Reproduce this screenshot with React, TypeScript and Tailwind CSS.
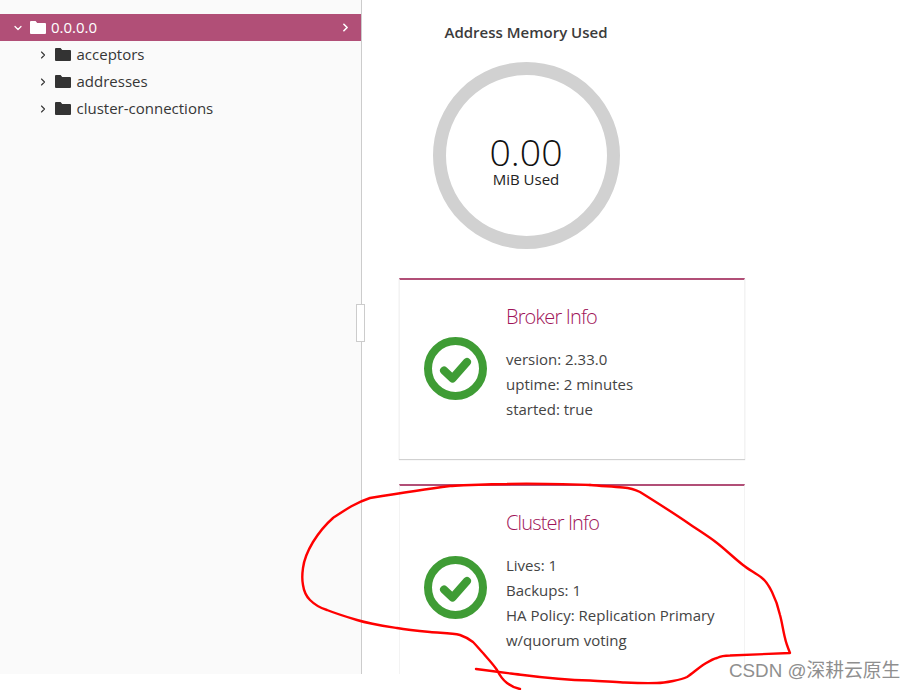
import { ChevronDown, ChevronRight } from 'lucide-react';

const FONT = "font-['Open_Sans',sans-serif]";

function FolderIcon({ className }: { className: string }) {
  return (
    <svg viewBox="0 0 16 13" className={className} fill="currentColor">
      <path d="M1 0h4.6l1.6 2H15a1 1 0 0 1 1 1v9a1 1 0 0 1-1 1H1a1 1 0 0 1-1-1V1a1 1 0 0 1 1-1z" />
    </svg>
  );
}

function TreeRow({ label }: { label: string }) {
  return (
    <div className="flex h-[27px] items-center pl-[37px] text-[#363636]">
      <ChevronRight size={12} strokeWidth={2.25} className="mr-[6px] text-[#363636]" />
      <FolderIcon className="mr-[5.500px] h-[13px] w-[16px] text-[#333333]" />
      <span className="text-[15px]">{label}</span>
    </div>
  );
}

function StatusIcon() {
  return (
    <svg viewBox="0 0 63 63" className="h-[63px] w-[63px]">
      <circle cx="31.5" cy="31.500" r="27.500" fill="none" stroke="#3f9c35" strokeWidth="8" />
      <path d="M20 33.500l8.500 8L43 25" fill="none" stroke="#3f9c35" strokeWidth="8" strokeLinejoin="round" strokeLinecap="round" />
    </svg>
  );
}

function InfoCard({ title, lines, bottom }: { title: string; lines: string[]; bottom?: boolean }) {
  return (
    <div
      className={`flex w-[346px] shrink-0 border-x border-t-2 border-x-[#f3f3f3] border-t-[#b14f77] bg-white ${
        bottom ? 'h-[181px] shadow-[0_1px_1px_rgba(0,0,0,0.18)]' : 'h-[204px]'
      }`}
    >
      <div className={`flex w-[106px] shrink-0 flex-col justify-center pl-[24px] ${bottom ? 'pb-[3px]' : ''}`}>
        <StatusIcon />
      </div>
      <div className="pt-[22px]">
        <h2 className="text-[20px] leading-[30px] font-light tracking-[-0.85px] text-[#a01459]">{title}</h2>
        <div className="mt-[15px] text-[15px] leading-[25px] text-[#444444]">
          {lines.map((line) => (
            <p key={line}>{line}</p>
          ))}
        </div>
      </div>
    </div>
  );
}

export default function App() {
  return (
    <div className={`relative h-[690px] w-[916px] overflow-hidden bg-white ${FONT}`}>
      <div className="flex h-[674px] overflow-hidden">
        <aside className="w-[362px] shrink-0 border-r border-[#cccccc] bg-[#fafafa] pt-[14px]">
          <div className="flex h-[27px] items-center bg-[#b14f77] pr-[9px] pl-[12px] text-white">
            <ChevronDown size={12} strokeWidth={2.5} className="mr-[6px]" />
            <FolderIcon className="mr-[5px] h-[13px] w-[16px]" />
            <span className="flex-1 text-[15px]">0.0.0.0</span>
            <ChevronRight size={13} strokeWidth={3} />
          </div>
          <TreeRow label="acceptors" />
          <TreeRow label="addresses" />
          <TreeRow label="cluster-connections" />
        </aside>

        <main className="flex flex-col pl-[37px]">
          <div className="flex w-[254px] flex-col items-center pt-[22px]">
            <h3 className="text-[15px] leading-[20px] font-semibold whitespace-nowrap text-[#3b3b3b]">
              Address Memory Used
            </h3>
            <div className="mt-[20px] flex h-[187px] w-[187px] flex-col items-center justify-center rounded-full border-[13px] border-[#d1d1d1] pt-[10px]">
              <span className="text-[37.5px] leading-[36px] font-light text-[#111111]">0.00</span>
              <span className="text-[15px] leading-[18px] text-[#222222]">MiB Used</span>
            </div>
          </div>
          <div className="mt-[29px] flex flex-col gap-[25px]">
            <InfoCard bottom title="Broker Info" lines={['version: 2.33.0', 'uptime: 2 minutes', 'started: true']} />
            <InfoCard
              title="Cluster Info"
              lines={['Lives: 1', 'Backups: 1', 'HA Policy: Replication Primary', 'w/quorum voting']}
            />
          </div>
        </main>
      </div>

      {/* splitter handle */}
      <div className="absolute top-[304px] left-[356px] h-[38px] w-[9px] border border-[#cccccc] bg-white" />

      {/* hand drawn annotation */}
      <svg viewBox="0 0 916 690" className="pointer-events-none absolute inset-0 h-[690px] w-[916px]" fill="none" stroke="#ff0000" strokeWidth="2.4" strokeLinejoin="round" strokeLinecap="round">
        <path d="M590 485C560 484 530 483 507 484C488 484 470 485 450 486C420 490 395 494 370 498C355 503 345 510 333 518C325 525 318 534 313 542C307 552 304 560 303 568C302 575 302 580 303 585C304 592 306 596 310 600C315 605 320 608 327 610C337 614 347 617 357 620C370 624 384 626 397 628C408 630 419 631 430 632C440 633 452 633 460 635C466 637 469 639 473 642C477 646 480 650 483 653C488 659 493 664 497 670C500 676 503 680 507 683C511 686 515 688 520 689" />
        <path d="M476 669C490 671 507 673 523 675C546 678 568 680 590 680.500C602 681 612 682 623 682.500C635 683 646 683.500 657 683C663 683 668 682 673 681C678 680 683 679 687 677C692 674 697 669 703 665C708 662 712 659 717 658C721 656 725 655.500 730 655.500L790 653C788 648 786 643 785 638C783 630 782 622 780 615C778 606 775 598 772 592C769 586 766 581 762 578C756 573 749 570 743 565C734 558 726 550 717 543C708 536 698 530 688 523C672 512 656 502 640 492C634 489 629 488 623 487.500C612 486.500 601 486 590 485" />
      </svg>

      {/* watermark */}
      <span className="absolute top-[659px] left-[729px] font-['Liberation_Sans','Noto_Sans_CJK_SC',sans-serif] text-[18.8px] leading-[24px] whitespace-nowrap text-[#8f8f8f]">
        CSDN @深耕云原生
      </span>
    </div>
  );
}
